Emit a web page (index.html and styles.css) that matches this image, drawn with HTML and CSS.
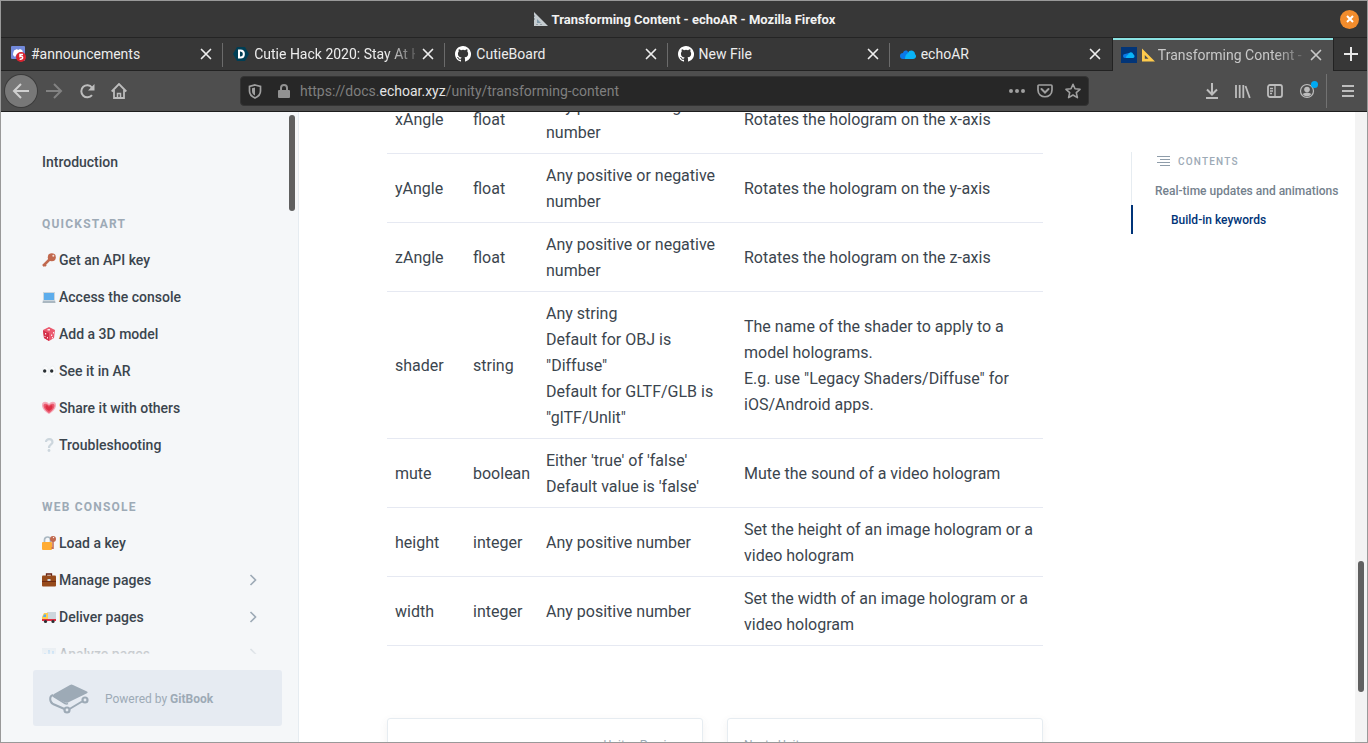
FILE: index.html
```html
<!DOCTYPE html>
<html lang="en">
<head>
<meta charset="utf-8">
<title>Transforming Content - echoAR</title>
<link rel="stylesheet" href="styles.css">
</head>
<body>
<svg class="defs" aria-hidden="true">
  <symbol id="x" viewBox="0 0 16 16"><path d="M3.500 3.500l9 9m0-9l-9 9" fill="none" stroke="currentColor" stroke-width="1.700" stroke-linecap="round"/></symbol>
  <symbol id="github" viewBox="0 0 16 16"><path fill="#fff" d="M8 0C3.580 0 0 3.580 0 8c0 3.540 2.290 6.530 5.470 7.590.4.070.550-.170.550-.380v-1.490c-2.010.370-2.530-.490-2.690-.940-.090-.230-.480-.940-.820-1.130-.280-.150-.680-.520-.010-.530.630-.010 1.080.580 1.230.820.720 1.210 1.870.870 2.330.660.070-.520.280-.870.510-1.070-1.780-.2-3.640-.890-3.640-3.950 0-.870.310-1.590.820-2.150-.080-.2-.360-1.020.080-2.120 0 0 .670-.210 2.200.820a7.600 7.600 0 0 1 4 0c1.530-1.040 2.200-.820 2.200-.820.440 1.100.160 1.920.080 2.120.510.560.820 1.270.820 2.150 0 3.070-1.870 3.750-3.650 3.950.290.250.540.730.540 1.480v2.200c0 .210.150.460.550.380A8 8 0 0 0 8 0z"/></symbol>
  <symbol id="chev" viewBox="0 0 8 12"><path d="M1.500 1l5 5-5 5" fill="none" stroke="currentColor" stroke-width="1.600"/></symbol>
</svg>
<div class="window">
  <header class="titlebar">
    <div class="title">
      <svg width="15" height="15" viewBox="0 0 15 15"><path fill="#c5ccd0" d="M1 0v14h14z"/><path fill="#7f98a8" d="M4 7v4h4z"/><path d="M1 4h1M1 7h1M4 13v-1M8 13v-1" stroke="#657079"/></svg>
      <h1>Transforming Content - echoAR - Mozilla Firefox</h1>
    </div>
    <button class="close-window" aria-label="Close window"><svg width="8" height="8" viewBox="0 0 8 8"><path d="M1 1l6 6m0-6L1 7" stroke="#fff" stroke-width="2"/></svg></button>
  </header>

  <nav class="tabs" aria-label="Tabs">
    <div class="tab">
      <svg width="15" height="16" viewBox="0 0 15 16"><path fill="#7289da" d="M1 0h12a1 1 0 0 1 1 1v14l-3-2H1a1 1 0 0 1-1-1V1a1 1 0 0 1 1-1z"/><path fill="#fff" d="M2 9c0-3 1-5 2-5l2-1 1 1 2-1 2 1c1 1 1 3 1 6H8L6 8l-2 3z"/><circle cx="10" cy="11" r="5" fill="#d9232e"/><path d="M12 8.500H9v2c4-1 3 3.500-.3 2.700" fill="none" stroke="#fff" stroke-width="1.500"/></svg>
      <a href="#">#announcements</a><button aria-label="Close tab"><svg><use href="#x"/></svg></button>
    </div>
    <div class="tab tab-wide">
      <svg width="16" height="16" viewBox="0 0 16 16"><path fill="#003e54" d="M4 1h8l4 7-4 7H4L0 8z"/><path d="M6 4.500h1.500c4.500 0 4.500 7 0 7H6z" fill="none" stroke="#fff" stroke-width="2"/></svg>
      <a href="#">Cutie Hack 2020: Stay At Home</a><button aria-label="Close tab"><svg><use href="#x"/></svg></button>
    </div>
    <div class="tab">
      <svg width="16" height="16"><use href="#github"/></svg>
      <a href="#">CutieBoard</a><button aria-label="Close tab"><svg><use href="#x"/></svg></button>
    </div>
    <div class="tab">
      <svg width="16" height="16"><use href="#github"/></svg>
      <a href="#">New File</a><button aria-label="Close tab"><svg><use href="#x"/></svg></button>
    </div>
    <div class="tab">
      <svg width="16" height="16" viewBox="0 0 16 16"><path fill="#0a78e8" d="M3 13a3 3 0 0 1 0-6c1-3 4-3 5-1l3 7z"/><path fill="#08b4f8" d="M5 13c0-3 1-5 3-6 1-4 7-3 7 1 2 2 1 5-2 5z"/></svg>
      <a href="#">echoAR</a><button aria-label="Close tab"><svg><use href="#x"/></svg></button>
    </div>
    <div class="tab active">
      <svg width="16" height="16" viewBox="0 0 16 16"><path fill="#023578" d="M0 0h16v16H0z"/><path fill="#0a78e8" d="M4 11a2 2 0 0 1 0-4l4-1v5z"/><path fill="#08b4f8" d="M5 11c0-2 1-3 2-3 1-4 5-3 5-1 2 1 2 4 0 4z"/></svg>
      <a href="#"><svg width="13" height="14" viewBox="0 0 14 14"><path fill="#ffcb4c" fill-rule="evenodd" d="M0 0v14h14zM3 7v4h4z"/></svg>Transforming Content - echoAR</a><button aria-label="Close tab"><svg><use href="#x"/></svg></button>
    </div>
    <button class="new-tab" aria-label="New tab"><svg width="14" height="14" viewBox="0 0 14 14"><path d="M7 0v14M0 7h14" stroke="#e8e8e8" stroke-width="2"/></svg></button>
  </nav>

  <div class="toolbar">
    <div class="nav-buttons">
      <button class="back" aria-label="Back"><svg width="18" height="16" viewBox="0 0 18 16"><path d="M17 8H2m7-7L2 8l7 7" fill="none" stroke="currentColor" stroke-width="2"/></svg></button>
      <button class="forward" aria-label="Forward" disabled><svg width="17" height="16" viewBox="0 0 17 16"><path d="M0 8h15M8 1l7 7-7 7" fill="none" stroke="currentColor" stroke-width="2"/></svg></button>
      <button aria-label="Reload"><svg width="16" height="16" viewBox="0 0 16 16"><path d="M13 4.500A6 6 0 1 0 13 12" fill="none" stroke="currentColor" stroke-width="2"/><path d="M15.500 1v6.500H9z" fill="currentColor"/></svg></button>
      <button aria-label="Home"><svg width="16" height="16" viewBox="0 0 16 16"><path d="M.7 8.500L8 1l7.300 7.500M3 7v8h10V7" fill="none" stroke="currentColor" stroke-width="1.800"/><path d="M6.500 15v-4.500h3V15" fill="none" stroke="currentColor" stroke-width="1.500"/></svg></button>
    </div>
    <div class="urlbar">
      <svg class="shield" width="14" height="15" viewBox="0 0 14 15"><path d="M7 1l5.500 1.500V7c0 3-2 5.500-5.500 7C3.500 12.500 1.500 10 1.500 7V2.500z" fill="none" stroke="currentColor" stroke-width="1.700"/><path d="M7 3.500L4 4.300V7c0 2 1 3.500 3 4.500z" fill="currentColor"/></svg>
      <svg class="lock" width="12" height="15" viewBox="0 0 12 15"><path d="M3 7V4a3 3 0 0 1 6 0v3" fill="none" stroke="currentColor" stroke-width="2"/><rect y="6" width="12" height="8" rx="1" fill="currentColor"/></svg>
      <a class="url" href="#">https://docs.<b>echoar.xyz</b>/unity/transforming-content</a>
      <button aria-label="Page actions"><svg width="16" height="4" viewBox="0 0 16 4"><path fill="currentColor" d="M0 2a2 2 0 0 1 4 0 2 2 0 0 1-4 0m6 0a2 2 0 0 1 4 0 2 2 0 0 1-4 0m6 0a2 2 0 0 1 4 0 2 2 0 0 1-4 0"/></svg></button>
      <button aria-label="Save to Pocket"><svg width="16" height="14" viewBox="0 0 16 14"><path d="M2 1h12q1 0 1 1v4c0 9-14 9-14 0V2q0-1 1-1z" fill="none" stroke="currentColor" stroke-width="1.700"/><path d="M4.500 5L8 8.500 11.500 5" fill="none" stroke="currentColor" stroke-width="2" stroke-linecap="round"/></svg></button>
      <button aria-label="Bookmark"><svg width="16" height="16" viewBox="0 0 16 16"><path d="M8 1.300l2 4.500 5 .5-3.700 3.300 1.100 5L8 12l-4.400 2.600 1.100-5L1 6.300l5-.5z" fill="none" stroke="currentColor" stroke-width="1.600" stroke-linejoin="round"/></svg></button>
    </div>
    <div class="tools">
      <button aria-label="Downloads"><svg width="14" height="16" viewBox="0 0 14 16"><path d="M7 0v11M2 6.500l5 5 5-5M1 15h12" fill="none" stroke="currentColor" stroke-width="2"/></svg></button>
      <button aria-label="Library"><svg width="16" height="15" viewBox="0 0 16 15"><path d="M1 1v13M4.700 1v13M8.300 1v13M10.500 2l4.300 12" fill="none" stroke="currentColor" stroke-width="1.800"/></svg></button>
      <button aria-label="Sidebars"><svg width="16" height="14" viewBox="0 0 16 14"><rect x="1" y="1" width="14" height="12" rx="2" fill="none" stroke="currentColor" stroke-width="1.800"/><path d="M8 1v12M3 4.500h3M3 7h3M3 9.500h2" stroke="currentColor" stroke-width="1.300"/></svg></button>
      <button class="account" aria-label="Account"><svg width="16" height="16" viewBox="0 0 16 16"><circle cx="8" cy="8" r="6.500" fill="none" stroke="currentColor" stroke-width="1.200"/><circle cx="8" cy="6.500" r="2.800" fill="currentColor"/><path d="M3.500 11q4.500-3 9 0-4.500 5-9 0" fill="currentColor"/></svg></button>
      <button class="menu" aria-label="Menu"><svg width="12" height="12" viewBox="0 0 12 12"><path d="M0 1h12M0 6h12M0 11h12" stroke="currentColor" stroke-width="2"/></svg></button>
    </div>
  </div>

  <div class="page">
    <aside class="sidebar">
      <nav class="side-nav">
        <ul><li><a href="#">Introduction</a></li></ul>
        <h2>Quickstart</h2>
        <ul>
          <li><a href="#"><svg viewBox="0 0 14 14"><path d="M1 13l8-8" stroke="#c1694f" stroke-width="2.500"/><path d="M2 11l2 2" stroke="#c1694f" stroke-width="2"/><circle cx="9.800" cy="4.200" r="4" fill="#c1694f"/><circle cx="11.300" cy="2.700" r="1" fill="#f6e2dc"/></svg>Get an API key</a></li>
          <li><a href="#"><svg viewBox="0 0 14 14"><path fill="#ccd6dd" d="M1 2h12v8l1 3H0l1-3z"/><path fill="#5dadec" d="M2 3h10v7H2z"/><path d="M1 12h12" stroke="#8899a6"/></svg>Access the console</a></li>
          <li><a href="#"><svg viewBox="0 0 14 14"><path fill="#ea596e" d="M7 0l6 3-1 8-5 3-5-3-1-8z"/><path fill="#d32f49" d="M1 3.500L7 6v8l-5-3z"/><path fill="#fbe3e8" d="M5.500 2h2.500v1.500H5.500zM9 7.500h1.200v1.500H9zM11 5h1v1.500h-1zM3 6h1.200v1.500H3zm2 4h1v1.500H5zm5 0h1v1.300h-1zM2.500 9h1v1h-1z"/></svg>Add a 3D model</a></li>
          <li><a href="#"><svg viewBox="0 0 14 14"><ellipse cx="3.500" cy="7" rx="3" ry="5" fill="#fafbfc" stroke="#e8edf0" stroke-width=".6"/><ellipse cx="10.500" cy="7" rx="3" ry="5" fill="#fafbfc" stroke="#e8edf0" stroke-width=".6"/><circle cx="2.700" cy="7" r="1.700" fill="#292f33"/><circle cx="9.700" cy="7" r="1.700" fill="#292f33"/></svg>See it in AR</a></li>
          <li><a href="#"><svg viewBox="0 0 14 14"><path fill="#f4abba" d="M7 13C2 10 0 7 0 4c0-4 5-4 7-1 2-3 7-3 7 1 0 3-2 6-7 9z"/><path fill="#ea596e" d="M7 12C3 9 1.500 7 1.500 4.500 1.500 2 5 2 7 4.500 9 2 12.500 2 12.500 4.500 12.500 7 11 9 7 12z"/><path fill="#dd2e44" d="M7 10C5 9 3 7 3.500 5 4 3.500 6 4 7 6c1-2 3-2.500 3.500-1C11 7 9 9 7 10z"/></svg>Share it with others</a></li>
          <li><a href="#"><svg viewBox="0 0 14 14"><path d="M4 4c0-4 6.500-3.500 6.500.200C10.500 6.500 7 6.500 7 10" fill="none" stroke="#ccd6dd" stroke-width="2.200"/><circle cx="7" cy="12.500" r="1.400" fill="#ccd6dd"/></svg>Troubleshooting</a></li>
        </ul>
        <h2>Web console</h2>
        <ul>
          <li><a href="#"><svg viewBox="0 0 14 14"><path d="M2.500 7V4c0-4 6-4 6 0v3" fill="none" stroke="#aab8c2" stroke-width="1.700"/><rect y="6" width="10" height="8" rx="1" fill="#ffac33"/><path d="M11 5v8M11 12H9.500" stroke="#c1694f" stroke-width="1.500"/><circle cx="11" cy="3" r="3" fill="#c1694f"/><circle cx="11.500" cy="1.600" r=".7" fill="#fff"/></svg>Load a key</a></li>
          <li><a href="#"><svg viewBox="0 0 14 14"><path d="M4.500 3V1h5v2" fill="none" stroke="#662113" stroke-width="1.300"/><rect y="2.500" width="14" height="11" rx="1" fill="#974b1c"/><path d="M0 8.500h14" stroke="#6f2b13"/><path fill="#ccd6dd" d="M5.500 6h3v2h-3z"/></svg>Manage pages<svg class="chevron"><use href="#chev"/></svg></a></li>
          <li><a href="#"><svg viewBox="0 0 14 14"><path fill="#ccd6dd" d="M5 2h9v8H5z"/><path fill="#ffcc4d" d="M2 3h4v7H0V7z"/><path fill="#55acee" d="M2 4.500h2V7H1z"/><path fill="#dd2e44" d="M0 9h14v2H0z"/><circle cx="3.500" cy="11.500" r="1.600" fill="#292f33"/><circle cx="11" cy="11.500" r="1.600" fill="#292f33"/></svg>Deliver pages<svg class="chevron"><use href="#chev"/></svg></a></li>
          <li><a href="#"><svg viewBox="0 0 14 14"><path fill="#d5dfe7" d="M0 1h14v12H0z"/><path fill="#5dadec" d="M2 6h2v7H2zm4-3h2v10H6zm4 1h2v9h-2z"/></svg>Analyze pages<svg class="chevron"><use href="#chev"/></svg></a></li>
        </ul>
      </nav>
      <a class="powered" href="#">
        <svg width="40" height="30" viewBox="0 0 40 30"><path fill="#9daab6" d="M21 1q1.500-.8 3 0l14 6.500q1.500.8 0 1.700L19 18.500q-1.500.7-3 0L5 13q-2-1.500 0-3z"/><path d="M4 11c-4 1-3.500 7 0 9l11.500 5M20.500 25L33 17.500" fill="none" stroke="#9daab6" stroke-width="2"/><path d="M4 12l12 7.500q1.500.8 3 0" fill="none" stroke="#9daab6" stroke-width="1.500"/><circle cx="18" cy="26" r="2.500" fill="none" stroke="#9daab6" stroke-width="2.200"/><circle cx="36" cy="16" r="2.500" fill="none" stroke="#9daab6" stroke-width="2.200"/></svg>
        <span>Powered by <b>GitBook</b></span>
      </a>
      <div class="thumb side-thumb"></div>
    </aside>

    <main>
      <table>
        <colgroup><col class="c-name"><col class="c-type"><col class="c-value"><col></colgroup>
        <tbody>
          <tr><td>xAngle</td><td>float</td><td>Any positive or negative number</td><td>Rotates the hologram on the x-axis</td></tr>
          <tr><td>yAngle</td><td>float</td><td>Any positive or negative number</td><td>Rotates the hologram on the y-axis</td></tr>
          <tr><td>zAngle</td><td>float</td><td>Any positive or negative number</td><td>Rotates the hologram on the z-axis</td></tr>
          <tr><td>shader</td><td>string</td><td>Any string<br>Default for OBJ is "Diffuse"<br>Default for GLTF/GLB is "glTF/Unlit"</td><td>The name of the shader to apply to a model holograms.<br>E.g. use "Legacy Shaders/Diffuse" for iOS/Android apps.</td></tr>
          <tr><td>mute</td><td>boolean</td><td>Either 'true' of 'false'<br>Default value is 'false'</td><td>Mute the sound of a video hologram</td></tr>
          <tr><td>height</td><td>integer</td><td>Any positive number</td><td>Set the height of an image hologram or a video hologram</td></tr>
          <tr><td>width</td><td>integer</td><td>Any positive number</td><td>Set the width of an image hologram or a video hologram</td></tr>
        </tbody>
      </table>
      <div class="pager">
        <a class="prev" href="#">Unity - Previous</a>
        <a href="#">Next - Unity</a>
      </div>
    </main>

    <nav class="toc" aria-label="Contents">
      <h2><svg width="13" height="10" viewBox="0 0 13 10"><path d="M0 .5h13M3 3.500h10M0 6.500h13M3 9.500h10" stroke="#8f9daa"/></svg>Contents</h2>
      <a href="#">Real-time updates and animations</a>
      <a class="current" href="#">Build-in keywords</a>
    </nav>
    <div class="scrollbar"><div class="thumb"></div></div>
  </div>
</div>
</body>
</html>
```
FILE: styles.css
```css
* { box-sizing: border-box; }
body { margin: 0; font-family: Roboto, "Liberation Sans", sans-serif; }
button { margin: 0; padding: 0; border: 0; background: none; color: inherit; font: inherit; }
a { color: inherit; text-decoration: none; }
h1, h2, ul { margin: 0; padding: 0; }
ul { list-style: none; }
svg { flex: none; display: block; }
.defs { position: absolute; width: 0; height: 0; }

.window { display: flex; flex-direction: column; height: 100vh; border: 1px solid #999; background: #373737; overflow: hidden; }

.titlebar { display: flex; align-items: center; height: 37px; padding: 0 8px 0 27px; border-bottom: 1px solid #242424; }
.title { flex: 1; display: flex; justify-content: center; align-items: center; gap: 4px; }
h1 { font-size: 13px; font-weight: 700; color: #f2f2f2; white-space: nowrap; }
.close-window { display: grid; place-items: center; width: 19px; height: 19px; border-radius: 50%; background: #f28c2c; }

.tabs { display: flex; flex: none; height: 33px; color: #ededed; border-bottom: 1px solid #222; }
.tab { position: relative; flex: 1; min-width: 0; display: flex; align-items: center; gap: 5px; padding: 0 9px 0 10px; font-size: 14px; }
.tab a { flex: 1; display: flex; align-items: center; gap: 3px; overflow: hidden; white-space: nowrap; line-height: 24px; }
.tab button svg { width: 16px; height: 16px; }
.tab:nth-child(-n+4)::after { content: ""; position: absolute; right: 0; top: 5px; width: 1px; height: 24px; background: #6b6b6b; }
.tab-wide a, .active a { -webkit-mask-image: linear-gradient(90deg, #000 82%, #0003); mask-image: linear-gradient(90deg, #000 82%, #0003); }
.tab.active { margin-bottom: -1px; background: #4e4e4e; border: solid #222; border-width: 0 1px; box-shadow: inset 0 2px #8be3e3; color: #c8c8c8; padding-left: 8px; }
.new-tab { display: grid; place-items: center; width: 33px; }

.toolbar { display: flex; align-items: center; flex: none; height: 41px; padding: 0 13px 0 4px; background: #4e4e4e; border-bottom: 1px solid #1d1d1d; color: #bdbdbd; }
.nav-buttons { display: flex; align-items: center; gap: 16px; width: 235px; }
.back { display: grid; place-items: center; width: 32px; height: 32px; border-radius: 50%; background: #787878; box-shadow: 0 0 0 1px #3c3c3c; color: #d0d0d0; margin-right: -7px; }
.forward { color: #828282; }
.urlbar { flex: 1; display: flex; align-items: center; gap: 12px; height: 30px; padding: 0 7px; border-radius: 4px; background: #272727; border: 1px solid #343434; color: #a0a0a0; }
.lock { margin-left: 4px; color: #929292; }
.url { flex: 1; font-size: 14px; line-height: 24px; color: #7f7f7f; margin-left: -2px; }
.url b { font-weight: 400; color: #e4e4e4; }
.tools { display: flex; align-items: center; gap: 16px; padding-left: 116px; }
.account { position: relative; }
.account::after { content: ""; position: absolute; right: -3px; top: -2px; width: 7px; height: 7px; border-radius: 50%; background: #00aaf2; }
.menu { display: grid; place-items: center; height: 34px; margin-left: -5px; padding-left: 15px; border-left: 1px solid #727272; }

.page { flex: 1; min-height: 0; display: flex; background: #fff; color: #3b454e; }
.sidebar { position: relative; flex: none; width: 298px; display: flex; flex-direction: column; background: #f5f7f9; border-right: 1px solid #e6ecf1; }
.side-nav { position: relative; flex: 1; min-height: 0; overflow: hidden; padding: 31px 41px 0; font-size: 14px; font-weight: 500; }
.side-nav::after { content: ""; position: absolute; inset: auto 0 0; height: 30px; background: linear-gradient(#f5f7f900, #f5f7f9d0); }
.side-nav a { display: flex; align-items: center; gap: 3px; height: 37px; }
.side-nav a svg { width: 14px; height: 14px; }
.side-nav a .chevron { width: 8px; height: 12px; margin-left: auto; color: #9daab6; }
.side-nav h2 { padding: 36px 0 9px; font-size: 12px; line-height: 16px; font-weight: 700; letter-spacing: 1.200px; text-transform: uppercase; color: #9daab6; }
.powered { display: flex; align-items: center; gap: 16px; height: 56px; margin: 16px 16px 16px 32px; padding: 1px 16px 0; border-radius: 3px; background: #e6ebf2; font-size: 12px; line-height: 16px; color: #9daab6; }
.thumb { width: 6px; border-radius: 3px; background: #606060; }
.side-thumb { position: absolute; right: 3px; top: 3px; height: 96px; }

main { flex: 1; min-width: 0; padding: 0 88px; overflow: hidden; }
table { width: 100%; margin-top: -27px; table-layout: fixed; border-collapse: separate; border-spacing: 0; font-size: 16px; line-height: 26px; }
td { padding: 9px 8px 7px; vertical-align: middle; border-bottom: 1px solid #e6e9f2; }
.c-name { width: 78px; }
.c-type { width: 73px; }
.c-value { width: 198px; }
.pager { display: flex; gap: 24px; margin-top: 72px; }
.pager a { flex: 1; height: 80px; padding: 17px 16px; border: 1px solid #e6ecf1; border-radius: 3px; box-shadow: 0 3px 8px #745f5f17; font-size: 12px; line-height: 18px; color: #9daab6; }
.pager .prev { text-align: right; }

.toc { flex: none; width: 224px; height: 82px; margin-top: 40px; border-left: 1px solid #e6ecf1; font-size: 12px; font-weight: 500; color: #74818d; }
.toc h2 { display: flex; align-items: center; gap: 8px; height: 18px; margin: 0 0 6px 25px; font-size: 10px; font-weight: 500; letter-spacing: 1.200px; text-transform: uppercase; color: #9daab6; }
.toc a { display: block; padding: 1px 0 0 23px; line-height: 28px; white-space: nowrap; }
.toc .current { margin-left: -1px; padding-left: 38px; border-left: 2px solid #003478; color: #003478; }
.scrollbar { flex: none; width: 12px; padding: 449px 3px 0; background: #f3f3f3; }
.scrollbar .thumb { height: 131px; }
```
